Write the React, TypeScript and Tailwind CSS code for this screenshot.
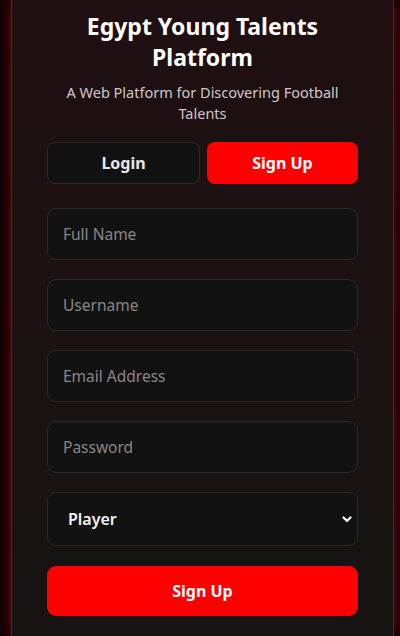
import React from "react";

export default function App() {
  const fields = ["Full Name", "Username", "Email Address", "Password"];

  return (
    <div className="min-h-[636px] h-[636px] overflow-hidden bg-[#0c0405] font-['Noto_Sans',sans-serif]">
      <div className="ml-[11px] w-[383px] h-[636px] border-x border-[#b00000] bg-gradient-to-b from-[#1f0f10] to-[#161313] shadow-[0_0_14px_rgba(200,0,0,0.55)] px-[35px] pt-[11px]">
        {/* Header */}
        <h1 className="text-center text-[23px] font-bold leading-[31px] text-white">
          Egypt Young Talents Platform
        </h1>
        <p className="mt-[9px] text-center text-[14.5px] leading-[21px] text-[#cfc8c8]">
          A Web Platform for Discovering Football Talents
        </p>

        {/* Tabs */}
        <div className="mt-[18px] flex gap-[7px]">
          <button className="h-[42px] flex-1 rounded-[8px] border border-[#2e2a2a] bg-[#121111] text-[16px] font-bold text-[#e8e8e8]">
            Login
          </button>
          <button className="h-[42px] flex-1 rounded-[8px] bg-[#ff0000] text-[16px] font-bold text-white">
            Sign Up
          </button>
        </div>

        {/* Form */}
        <form className="mt-[24px] flex flex-col gap-[19px]">
          {fields.map((f) => (
            <input
              key={f}
              type={f === "Password" ? "password" : "text"}
              placeholder={f}
              className="h-[52px] w-full rounded-[9px] border border-[#2c2828] bg-[#121212] px-[15px] text-[15.5px] text-white placeholder:text-[#8a8686] outline-none"
            />
          ))}
          <div className="relative">
            <select className="h-[54px] w-full appearance-none rounded-[9px] border border-[#2c2828] bg-[#121212] pl-[20px] text-[16px] font-semibold text-[#f2f2f2] outline-none">
              <option>Player</option>
              <option>Scout</option>
              <option>Coach</option>
            </select>
            <svg
              className="pointer-events-none absolute right-[5px] top-[21px] h-[12px] w-[12px]"
              viewBox="0 0 12 12"
              fill="none"
              stroke="white"
              strokeWidth="2.2"
              strokeLinecap="round"
              strokeLinejoin="round"
            >
              <path d="M2.5 4.5 6 8l3.5-3.5" />
            </svg>
          </div>
          <button
            type="button"
            className="h-[50px] w-full mt-[1px] rounded-[9px] bg-[#ff0000] text-[16px] font-bold text-white"
          >
            Sign Up
          </button>
        </form>
      </div>
    </div>
  );
}
